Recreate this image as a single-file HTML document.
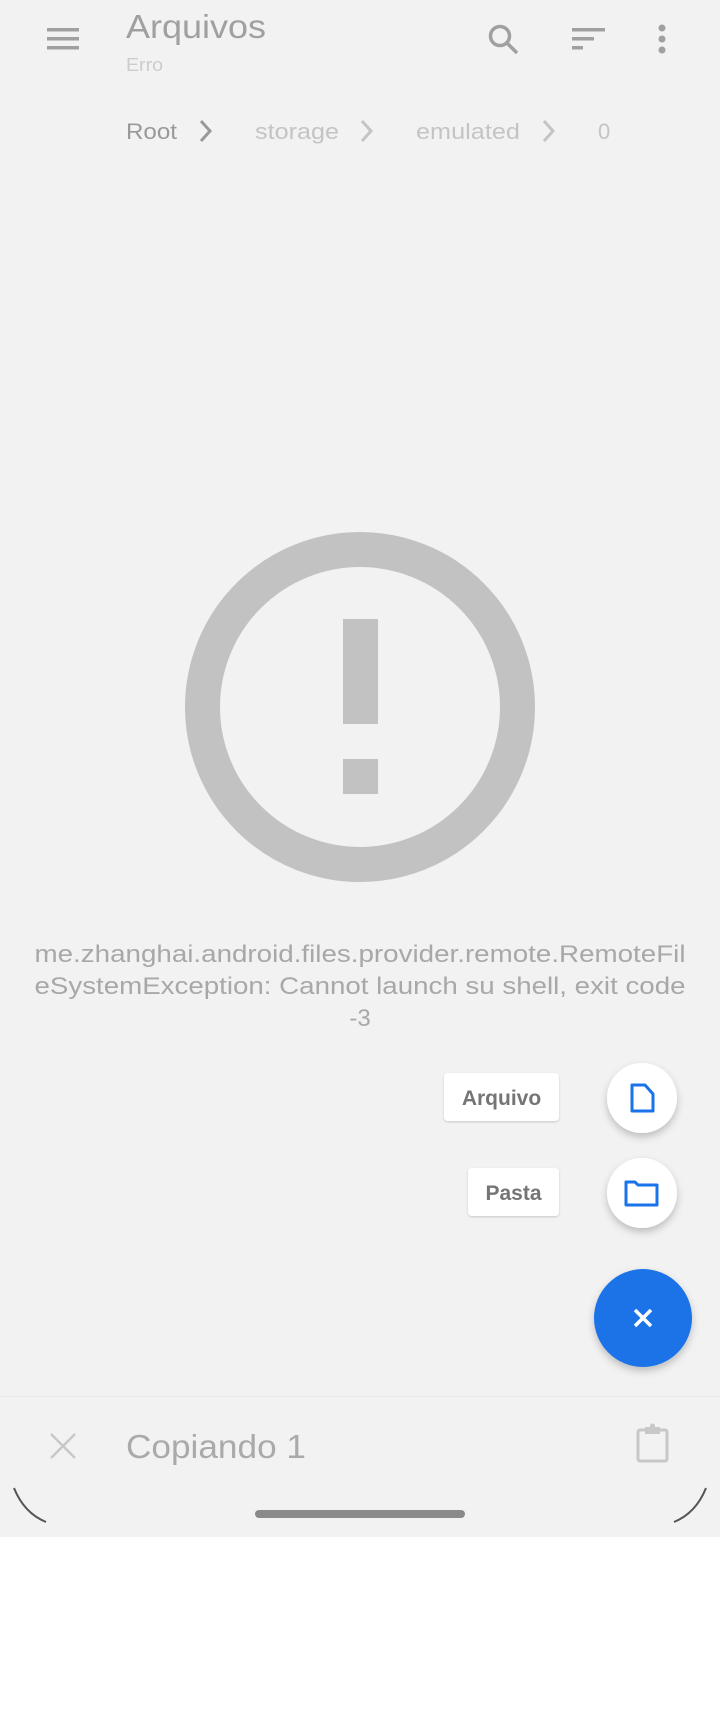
<!DOCTYPE html>
<html><head><meta charset="utf-8"><style>
html,body{margin:0;padding:0;width:720px;height:1712px;background:#fff;overflow:hidden}
svg{display:block}
text{font-family:"Liberation Sans",sans-serif}
</style></head><body>
<svg width="720" height="1712" viewBox="0 0 720 1712" xmlns="http://www.w3.org/2000/svg">
<defs>
<filter id="sh" x="-50%" y="-50%" width="200%" height="200%"><feDropShadow dx="0" dy="4" stdDeviation="4" flood-color="#000" flood-opacity="0.22"/></filter>
<filter id="sh2" x="-20%" y="-50%" width="140%" height="200%"><feDropShadow dx="0" dy="1" stdDeviation="1" flood-color="#000" flood-opacity="0.18"/></filter>
</defs>
<rect x="0" y="0" width="720" height="1537" fill="#f2f2f2"/>
<!-- header -->
<g fill="#a0a0a0">
<rect x="47" y="28" width="32" height="3.5"/><rect x="47" y="37" width="32" height="3.5"/><rect x="47" y="46" width="32" height="3.5"/>
</g>
<text x="126" y="38" font-size="33" fill="#a0a0a0" textLength="140" lengthAdjust="spacingAndGlyphs">Arquivos</text>
<text x="126" y="71" font-size="18" fill="#cccccc" textLength="37" lengthAdjust="spacingAndGlyphs">Erro</text>
<circle cx="500" cy="36" r="9.5" fill="none" stroke="#a0a0a0" stroke-width="3.5"/>
<line x1="507" y1="43" x2="517" y2="53" stroke="#a0a0a0" stroke-width="3.5"/>
<g fill="#a0a0a0"><rect x="572" y="28" width="33" height="3.5"/><rect x="572" y="37" width="22" height="3.5"/><rect x="572" y="46" width="11" height="3.5"/></g>
<g fill="#a0a0a0"><circle cx="662" cy="28" r="3.5"/><circle cx="662" cy="39" r="3.5"/><circle cx="662" cy="50" r="3.5"/></g>
<!-- breadcrumb -->
<text x="126" y="139" font-size="22" fill="#999" textLength="51" lengthAdjust="spacingAndGlyphs">Root</text>
<path d="M201 121 l9 10 l-9 10" fill="none" stroke="#999" stroke-width="3"/>
<text x="255" y="139" font-size="22" fill="#c4c4c4" textLength="84" lengthAdjust="spacingAndGlyphs">storage</text>
<path d="M362 121 l9 10 l-9 10" fill="none" stroke="#c4c4c4" stroke-width="3"/>
<text x="416" y="139" font-size="22" fill="#c4c4c4" textLength="104" lengthAdjust="spacingAndGlyphs">emulated</text>
<path d="M544 121 l9 10 l-9 10" fill="none" stroke="#c4c4c4" stroke-width="3"/>
<text x="598" y="139" font-size="22" fill="#c4c4c4">0</text>
<!-- error icon -->
<circle cx="360" cy="707" r="157.5" fill="none" stroke="#c2c2c2" stroke-width="35"/>
<rect x="343" y="619" width="35" height="105" fill="#c2c2c2"/>
<rect x="343" y="759" width="35" height="35" fill="#c2c2c2"/>
<!-- error text -->
<g font-size="24" fill="#a8a8a8" text-anchor="middle">
<text x="360" y="962" textLength="651" lengthAdjust="spacingAndGlyphs">me.zhanghai.android.files.provider.remote.RemoteFil</text>
<text x="360" y="994" textLength="651" lengthAdjust="spacingAndGlyphs">eSystemException: Cannot launch su shell, exit code</text>
<text x="360" y="1026">-3</text>
</g>
<!-- fab menu -->
<rect x="444" y="1073" width="115" height="48" rx="4" fill="#fff" filter="url(#sh2)"/>
<text x="501.5" y="1105" font-size="21" font-weight="bold" fill="#757575" text-anchor="middle">Arquivo</text>
<circle cx="642" cy="1098" r="35" fill="#fff" filter="url(#sh)"/>
<path d="M632 1085 h13 l8 9 v17 h-21 z" fill="none" stroke="#1a73e8" stroke-width="3" stroke-linejoin="round"/>
<rect x="468" y="1168" width="91" height="48" rx="4" fill="#fff" filter="url(#sh2)"/>
<text x="513.5" y="1200" font-size="21" font-weight="bold" fill="#757575" text-anchor="middle">Pasta</text>
<circle cx="642" cy="1193" r="35" fill="#fff" filter="url(#sh)"/>
<path d="M626 1182 h9 l3 3 h19 v20 h-31 z" fill="none" stroke="#1a73e8" stroke-width="3" stroke-linejoin="round"/>
<circle cx="643" cy="1318" r="49" fill="#1a73e8" filter="url(#sh)"/>
<path d="M635 1310 l16 16 M651 1310 l-16 16" stroke="#fff" stroke-width="3.5"/>
<!-- bottom bar -->
<rect x="0" y="1396" width="720" height="1" fill="#e8e8e8"/>
<path d="M51 1434 l24 24 M75 1434 l-24 24" stroke="#c8c8c8" stroke-width="2.5"/>
<text x="126" y="1458" font-size="33" fill="#aaa" textLength="180" lengthAdjust="spacingAndGlyphs">Copiando 1</text>
<rect x="638" y="1430" width="29" height="31" rx="2" fill="none" stroke="#c8c8c8" stroke-width="3"/>
<rect x="645" y="1427" width="15" height="7" fill="#c8c8c8"/>
<circle cx="652.5" cy="1426" r="2.5" fill="#c8c8c8"/>
<rect x="255" y="1510" width="210" height="8" rx="4" fill="#8a8a8a"/>
<path d="M14 1488 Q24 1513 46 1522" fill="none" stroke="#555" stroke-width="2"/>
<path d="M706 1488 Q696 1513 674 1522" fill="none" stroke="#555" stroke-width="2"/>
</svg>
</body></html>
